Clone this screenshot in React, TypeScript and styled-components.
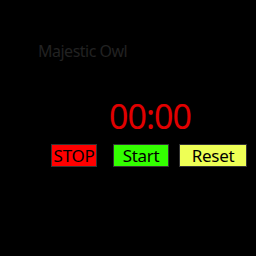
import React from "react";
import styled, { createGlobalStyle } from "styled-components";

const GlobalStyle = createGlobalStyle`
  html, body {
    margin: 0;
    padding: 0;
    background: #000;
  }
  body {
    font-family: "Noto Sans", "Open Sans", sans-serif;
  }
`;

const Page = styled.div`
  width: 256px;
  height: 256px;
  box-sizing: border-box;
  padding: 40px 0 0 38px;
  background: #000;
`;

const Title = styled.div`
  color: #222;
  font-size: 16px;
  line-height: 22px;
  letter-spacing: -0.5px;
`;

const Clock = styled.div`
  color: #e10000;
  font-size: 34px;
  line-height: 40px;
  letter-spacing: -1px;
  margin: 34px 0 0 71px;
`;

const Controls = styled.div`
  display: flex;
  margin: 8px 0 0 13px;
`;

const Button = styled.button<{ bg: string; w: number; after: number }>`
  background: ${({ bg }) => bg};
  border: 1px solid #333;
  color: #000;
  font-family: "Noto Sans", "Open Sans", sans-serif;
  font-size: 17px;
  line-height: 21px;
  letter-spacing: -0.3px;
  width: ${({ w }) => w}px;
  height: 23px;
  padding: 0;
  margin-right: ${({ after }) => after}px;
  box-sizing: border-box;
  text-align: center;
`;

export default function App() {
  return (
    <>
      <GlobalStyle />
      <Page>
        <Title>Majestic Owl</Title>
        <Clock>00:00</Clock>
        <Controls>
          <Button bg="#ff0000" w={46} after={16}>STOP</Button>
          <Button bg="#33ff00" w={56} after={10}>Start</Button>
          <Button bg="#eeff55" w={68} after={0}>Reset</Button>
        </Controls>
      </Page>
    </>
  );
}
